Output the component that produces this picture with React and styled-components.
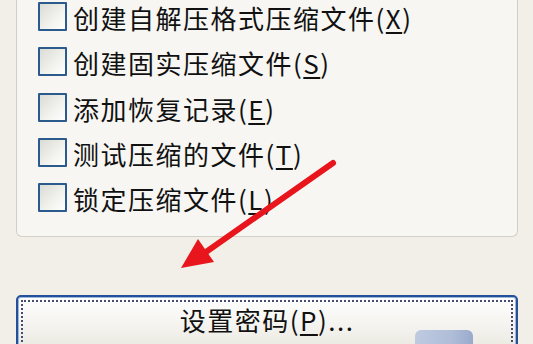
import React from 'react'
import styled, {createGlobalStyle} from 'styled-components'

const Global = createGlobalStyle`
  html, body { margin: 0; padding: 0; background: #f1efe8; }
  body { width: 533px; height: 344px; overflow: hidden; }
`;

const options = [
  {label: '创建自解压格式压缩文件', key: 'X'},
  {label: '创建固实压缩文件', key: 'S'},
  {label: '添加恢复记录', key: 'E'},
  {label: '测试压缩的文件', key: 'T'},
  {label: '锁定压缩文件', key: 'L'},
];

const Option = ({label, hotkey}) => (
  <Row>
    <Box/>
    <Label>{label}(<Key>{hotkey}</Key>)</Label>
  </Row>
);

export default function App() {
  return (
    <Page>
      <Global/>
      <GroupBox>
        {options.map(o => <Option key={o.key} label={o.label} hotkey={o.key}/>)}
      </GroupBox>
      <Button>
        <Focus>设置密码(<Key>P</Key>)...</Focus>
      </Button>
      <Arrow width="533" height="344" viewBox="0 0 533 344">
        <line x1="333" y1="163" x2="196" y2="259" stroke="#e8161c" strokeWidth="6" strokeLinecap="round"/>
        <polygon points="181,268 198,239 214,262" fill="#e8161c"/>
      </Arrow>
      <Smudge/>
    </Page>
  )
}

const Page = styled.div`
  position: relative;
  width: 533px;
  height: 344px;
  overflow: hidden;
  padding: 0 15px 0 16px;
  box-sizing: border-box;
  font-family: "Noto Sans CJK SC", "Liberation Sans", sans-serif;
  color: #111;
`;

const GroupBox = styled.div`
  height: 237px;
  box-sizing: border-box;
  border: 1px solid #d2d0c4;
  border-top: none;
  border-radius: 0 0 6px 6px;
  background: #f7f6f2;
  padding: 2px 0 0 21px;
  display: flex;
  flex-direction: column;
`;

const Row = styled.div`
  height: 45.25px;
  display: flex;
  align-items: flex-start;
  gap: 6px;
`;

const Box = styled.span`
  width: 25px;
  height: 25px;
  flex: none;
  border: 2px solid #2a5b8c;
  border-radius: 1px;
  background: linear-gradient(135deg, #dcdcd6 0%, #f2f2ee 60%, #ffffff 100%);
`;

const Label = styled.span`
  font-size: 26px;
  line-height: 28px;
  letter-spacing: 1.5px;
  margin-top: 2px;
`;

const Key = styled.span`
  text-decoration: underline;
  text-underline-offset: 3px;
`;

const Button = styled.div`
  margin-top: 58px;
  height: 60px;
  box-sizing: border-box;
  border: 2px solid #24509a;
  border-radius: 5px;
  background: linear-gradient(#ffffff, #f2f1ec 60%, #e8e6dd);
  padding: 3px;
  box-shadow: inset 0 0 0 1px #9fb6dd;
`;

const Focus = styled.div`
  height: 100%;
  box-sizing: border-box;
  border: 2px dotted #444c70;
  border-bottom: none;
  display: flex;
  justify-content: center;
  padding-top: 1px;
  font-size: 26px;
  line-height: 34px;
  letter-spacing: 1.5px;
`;

const Arrow = styled.svg`
  position: absolute;
  left: 0;
  top: 0;
  pointer-events: none;
`;

const Smudge = styled.div`
  position: absolute;
  left: 415px;
  top: 330px;
  width: 58px;
  height: 20px;
  border-radius: 6px;
  background: linear-gradient(90deg, #b9c6df, #a7b7d6 65%, #8fa2c9);
  opacity: 0.9;
`;
